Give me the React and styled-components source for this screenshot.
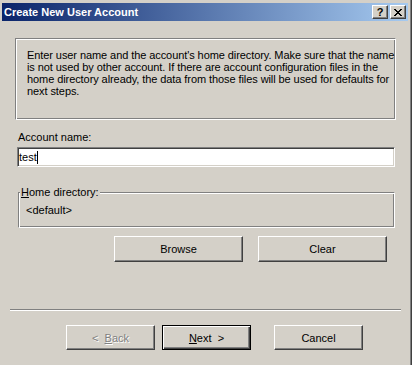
import React from "react";
import styled, { createGlobalStyle } from "styled-components";

const GlobalStyle = createGlobalStyle`
  html, body {
    margin: 0;
    padding: 0;
    background: #d4d0c8;
  }
  body {
    font-family: "Liberation Sans", Arial, sans-serif;
    font-size: 11px;
    color: #000;
  }
`;

const Window = styled.div`
  width: 412px;
  height: 365px;
  box-sizing: border-box;
  padding-top: 3px;
  background: #d4d0c8;
  border-right: 1px solid #404040;
  box-shadow: inset -1px 0 #808080;
  display: flex;
  flex-direction: column;
  overflow: hidden;
`;

const TitleBar = styled.div`
  height: 18px;
  margin: 0 3px 0 2px;
  padding: 0 2px;
  background: linear-gradient(to right, #0a246a, #a6caf0);
  display: flex;
  align-items: center;
  justify-content: space-between;
`;

const TitleText = styled.span`
  color: #fff;
  font-weight: bold;
  font-size: 11px;
  line-height: 13px;
`;

const TitleButtons = styled.div`
  display: flex;
  gap: 2px;
`;

const CaptionButton = styled.div`
  width: 16px;
  height: 14px;
  box-sizing: border-box;
  background: #d4d0c8;
  border: 1px solid;
  border-color: #fff #404040 #404040 #fff;
  box-shadow: inset -1px -1px #808080;
  display: flex;
  align-items: center;
  justify-content: center;
  font-weight: bold;
  font-size: 11px;
  line-height: 11px;
`;

const Content = styled.div`
  padding-left: 15px;
  display: flex;
  flex-direction: column;
  align-items: flex-start;
`;

const InfoBox = styled.div`
  margin-top: 17px;
  width: 381px;
  height: 82px;
  box-sizing: border-box;
  padding: 10px 0 0 11px;
  border: 1px solid;
  border-color: #808080 #fff #fff #808080;
  box-shadow: inset 1px 1px #fff, inset -1px -1px #808080;
  line-height: 12px;
  letter-spacing: -0.08px;
  white-space: nowrap;
  overflow: hidden;
`;

const Label = styled.div`
  margin: 11px 0 0 3px;
  line-height: 13px;
`;

const TextField = styled.div`
  margin: 3px 0 0 2px;
  width: 378px;
  height: 20px;
  box-sizing: border-box;
  padding-left: 1px;
  background: #fff;
  border: 1px solid;
  border-color: #808080 #fff #fff #808080;
  box-shadow: inset 1px 1px #404040, inset -1px -1px #d4d0c8;
  display: flex;
  align-items: center;
`;

const Caret = styled.span`
  display: inline-block;
  width: 1px;
  height: 13px;
  background: #000;
`;

const Group = styled.fieldset`
  margin: 19px 0 0 3px;
  width: 377px;
  height: 42px;
  box-sizing: border-box;
  padding: 0 0 0 1px;
  border: 1px solid;
  border-color: #808080 #fff #fff #808080;
  box-shadow: inset 1px 1px #fff, inset -1px -1px #808080;
  min-width: 0;
`;

const Legend = styled.legend`
  padding: 0 1px;
  line-height: 13px;
  background: #d4d0c8;
`;

const GroupValue = styled.div`
  margin: 5px 0 0 6px;
  line-height: 13px;
`;

const Row = styled.div`
  display: flex;
  gap: ${(p) => p.$gap}px;
  margin: ${(p) => p.$top}px 0 0 ${(p) => p.$left}px;
`;

const Button = styled.div`
  width: ${(p) => p.$w}px;
  height: ${(p) => p.$h}px;
  margin-left: ${(p) => p.$ml || 0}px;
  box-sizing: border-box;
  display: flex;
  align-items: center;
  justify-content: center;
  background: #d4d0c8;
  border: 1px solid;
  border-color: ${(p) => (p.$default ? "#000" : "#fff #404040 #404040 #fff")};
  box-shadow: ${(p) =>
    p.$default
      ? "inset 1px 1px #fff, inset -1px -1px #404040, inset -2px -2px #808080"
      : "inset -1px -1px #808080"};
  color: ${(p) => (p.$disabled ? "#808080" : "#000")};
  text-shadow: ${(p) => (p.$disabled ? "1px 1px #fff" : "none")};
  white-space: pre;
`;

const Footer = styled.div`
  padding: 0 10px;
  display: flex;
  flex-direction: column;
`;

const Separator = styled.div`
  margin-top: 47px;
  height: 0;
  border-top: 1px solid #808080;
  border-bottom: 1px solid #fff;
`;

function CloseGlyph() {
  return (
    <svg width="8" height="7" viewBox="0 0 8 7" shapeRendering="crispEdges">
      <path
        fill="#000"
        d="M0 0h2v1H0z M6 0h2v1H6z M1 1h2v1H1z M5 1h2v1H5z M2 2h4v1H2z M3 3h2v1H3z M2 4h4v1H2z M1 5h2v1H1z M5 5h2v1H5z M0 6h2v1H0z M6 6h2v1H6z"
      />
    </svg>
  );
}

export default function App() {
  return (
    <>
      <GlobalStyle />
      <Window>
        <TitleBar>
          <TitleText>Create New User Account</TitleText>
          <TitleButtons>
            <CaptionButton>?</CaptionButton>
            <CaptionButton>
              <CloseGlyph />
            </CaptionButton>
          </TitleButtons>
        </TitleBar>

        <Content>
          <InfoBox>
            Enter user name and the account's home directory. Make sure that the name
            <br />
            is not used by other account. If there are account configuration files in the
            <br />
            home directory already, the data from those files will be used for defaults for
            <br />
            next steps.
          </InfoBox>

          <Label>Account name:</Label>
          <TextField>
            test
            <Caret />
          </TextField>

          <Group>
            <Legend>
              <u>H</u>ome directory:
            </Legend>
            <GroupValue>&lt;default&gt;</GroupValue>
          </Group>

          <Row $top={8} $left={99} $gap={15}>
            <Button $w={129} $h={26}>Browse</Button>
            <Button $w={129} $h={26}>Clear</Button>
          </Row>
        </Content>

        <Footer>
          <Separator />
          <Row $top={14} $left={56} $gap={7}>
            <Button $w={89} $h={25} $disabled>
              {"<  "}
              <u>B</u>ack
            </Button>
            <Button $w={89} $h={25} $default>
              <u>N</u>
              {"ext  >"}
            </Button>
            <Button $w={89} $h={25} $ml={16}>Cancel</Button>
          </Row>
        </Footer>
      </Window>
    </>
  );
}
